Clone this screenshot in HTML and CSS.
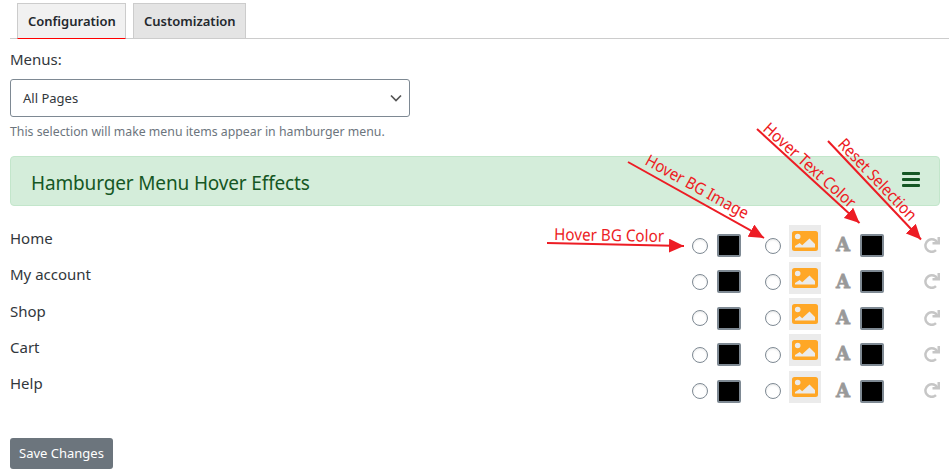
FILE: index.html
```html
<!DOCTYPE html>
<html lang="en">
<head>
<meta charset="utf-8">
<title>Hamburger Menu Settings</title>
<link rel="stylesheet" href="styles.css">
</head>
<body>
<svg class="symbols" aria-hidden="true">
  <symbol id="image" viewBox="0 0 26 20"><path fill="#ffa726" fill-rule="evenodd" d="M2.5 0h21A2.5 2.5 0 0 1 26 2.500v15a2.500 2.500 0 0 1-2.500 2.500h-21A2.500 2.500 0 0 1 0 17.500v-15A2.500 2.500 0 0 1 2.500 0zM5.700 2.700a2.800 2.800 0 1 0 0 5.600 2.800 2.800 0 0 0 0-5.600zM3 16.500h20v-3.500l-5.500-5.500-7.300 6.800-2.500-2.300L3 15z"/></symbol>
  <symbol id="reset" viewBox="0 0 16 16"><path d="M13.500 6A6.300 6.300 0 1 0 12 13.200" fill="none" stroke="#c6c6c6" stroke-width="2.500"/><path d="M16 0v7.500H8.500V5h5V0z" fill="#c6c6c6"/></symbol>
</svg>
<nav class="tabs">
  <a class="tab active">Configuration</a>
  <a class="tab">Customization</a>
</nav>
<main>
  <label class="menus">Menus:</label>
  <div class="select"><span>All Pages</span><svg width="12" height="8" viewBox="0 0 12 8"><path d="M1 1.500l5 5 5-5" fill="none" stroke="#555" stroke-width="1.700"/></svg></div>
  <p class="hint">This selection will make menu items appear in hamburger menu.</p>
  <header class="banner"><h1>Hamburger Menu Hover Effects</h1><div class="bars"><i></i><i></i><i></i></div></header>
  <section class="rows">
    <div class="row"><span class="name">Home</span><i class="radio"></i><i class="swatch"></i><i class="radio"></i><span class="tile"><svg><use href="#image"/></svg></span><b>A</b><i class="swatch"></i><svg class="reset"><use href="#reset"/></svg></div>
    <div class="row"><span class="name">My account</span><i class="radio"></i><i class="swatch"></i><i class="radio"></i><span class="tile"><svg><use href="#image"/></svg></span><b>A</b><i class="swatch"></i><svg class="reset"><use href="#reset"/></svg></div>
    <div class="row"><span class="name">Shop</span><i class="radio"></i><i class="swatch"></i><i class="radio"></i><span class="tile"><svg><use href="#image"/></svg></span><b>A</b><i class="swatch"></i><svg class="reset"><use href="#reset"/></svg></div>
    <div class="row"><span class="name">Cart</span><i class="radio"></i><i class="swatch"></i><i class="radio"></i><span class="tile"><svg><use href="#image"/></svg></span><b>A</b><i class="swatch"></i><svg class="reset"><use href="#reset"/></svg></div>
    <div class="row"><span class="name">Help</span><i class="radio"></i><i class="swatch"></i><i class="radio"></i><span class="tile"><svg><use href="#image"/></svg></span><b>A</b><i class="swatch"></i><svg class="reset"><use href="#reset"/></svg></div>
  </section>
  <button class="save">Save Changes</button>
</main>
<svg class="notes" width="949" height="471" viewBox="0 0 949 471">
  <defs><marker id="head" markerUnits="userSpaceOnUse" markerWidth="16" markerHeight="14" refX="15" refY="7" orient="auto"><path d="M0 0L15 7 0 14z" fill="#ed1c24"/></marker></defs>
  <g stroke="#ed1c24" stroke-width="2">
    <path marker-end="url(#head)" d="M547 243L684 246"/>
    <path marker-end="url(#head)" d="M628 162L764 238"/>
    <path marker-end="url(#head)" d="M757 129L859.500 223"/>
    <path marker-end="url(#head)" d="M828 141L921 239.500"/>
  </g>
  <g class="captions">
    <text textLength="110" lengthAdjust="spacingAndGlyphs" transform="translate(554 240) rotate(1)">Hover BG Color</text>
    <text textLength="115" lengthAdjust="spacingAndGlyphs" transform="translate(644 164) rotate(28.800)">Hover BG Image</text>
    <text textLength="118" lengthAdjust="spacingAndGlyphs" transform="translate(762 130) rotate(42)">Hover Text Color</text>
    <text textLength="106" lengthAdjust="spacingAndGlyphs" transform="translate(837 145) rotate(46.600)">Reset Selection</text>
  </g>
</svg>
</body>
</html>
```

FILE: styles.css
```css
* { box-sizing: border-box; }
body { margin: 0; width: 949px; height: 471px; overflow: hidden; background: #fff; color: #32373c; font-family: "Noto Sans", sans-serif; }
.symbols { display: none; }
.tabs { display: flex; gap: 7px; height: 39px; margin-left: 10px; padding: 3px 0 0 7px; border-bottom: 1px solid #ccc; }
.tab { height: 36px; padding: 0 10px; border: 1px solid #ccc; background: #e4e4e4; color: #23282d; font: 600 13px/35px "Noto Sans", sans-serif; width: 113px; white-space: nowrap; }
.tab.active { width: 109px; background: #f1f1f1; border-bottom-color: #f00; }
main { width: 930px; margin-left: 10px; }
.menus { display: block; height: 40px; padding-top: 8px; font-size: 15px; line-height: 24px; }
.select { display: flex; align-items: center; justify-content: space-between; width: 400px; height: 38px; padding: 0 7px 0 12px; border: 1px solid #7e8993; border-radius: 3px; font-size: 13px; }
.hint { height: 39px; margin: 0; padding-top: 5px; color: #6c757d; font-size: 12.300px; line-height: 19px; white-space: nowrap; }
.banner { display: flex; justify-content: space-between; height: 50px; padding: 0 19px 0 20px; border: 1px solid #c3e6cb; border-radius: 4px; background: #d4edda; color: #155724; }
h1 { margin: 0; font-size: 19px; font-weight: 400; line-height: 52px; letter-spacing: -.15px; }
.bars { display: flex; flex-direction: column; gap: 3px; width: 18px; padding-top: 14.500px; }
.bars i { height: 3px; border-radius: 1px; background: #155724; }
.rows { display: grid; grid-auto-rows: 36.400px; height: 213px; padding-top: 19.300px; }
.row { display: grid; align-items: start; grid-template-columns: 682px 25px 48px 24px 47px 24px 38px 42px; }
.name { margin-top: .5px; font-size: 15px; line-height: 24px; }
.radio { width: 16px; height: 16px; margin-top: 12.300px; border: 1px solid #7e8993; border-radius: 50%; background: #fff; box-shadow: inset 0 1px 2px rgba(0,0,0,.1); }
.swatch { width: 24px; height: 23px; margin-top: 8.700px; border: 2px solid #7e8993; border-radius: 2px; background: #000; }
.tile { display: block; width: 32px; height: 32px; padding: 6px 3px; background: #ebebeb; }
.tile svg { display: block; width: 26px; height: 20px; }
.row b { width: 14px; display: flex; justify-content: center; margin-top: 9px; color: #999; font: bold 18px/22px "DejaVu Serif", serif; -webkit-text-stroke: .8px #999; }
.reset { width: 16px; height: 16px; margin: 11.500px 0 0 26px; }
.save { display: block; width: 103px; height: 31px; padding: 0; border: 0; border-radius: 3px; background: #6c757d; color: #fff; font: 13px/31px "Noto Sans", sans-serif; margin-top: 19px; }
.notes { position: absolute; top: 0; left: 0; pointer-events: none; }
.captions { fill: #ed1c24; font: 16.500px "Noto Sans", sans-serif; }
```
